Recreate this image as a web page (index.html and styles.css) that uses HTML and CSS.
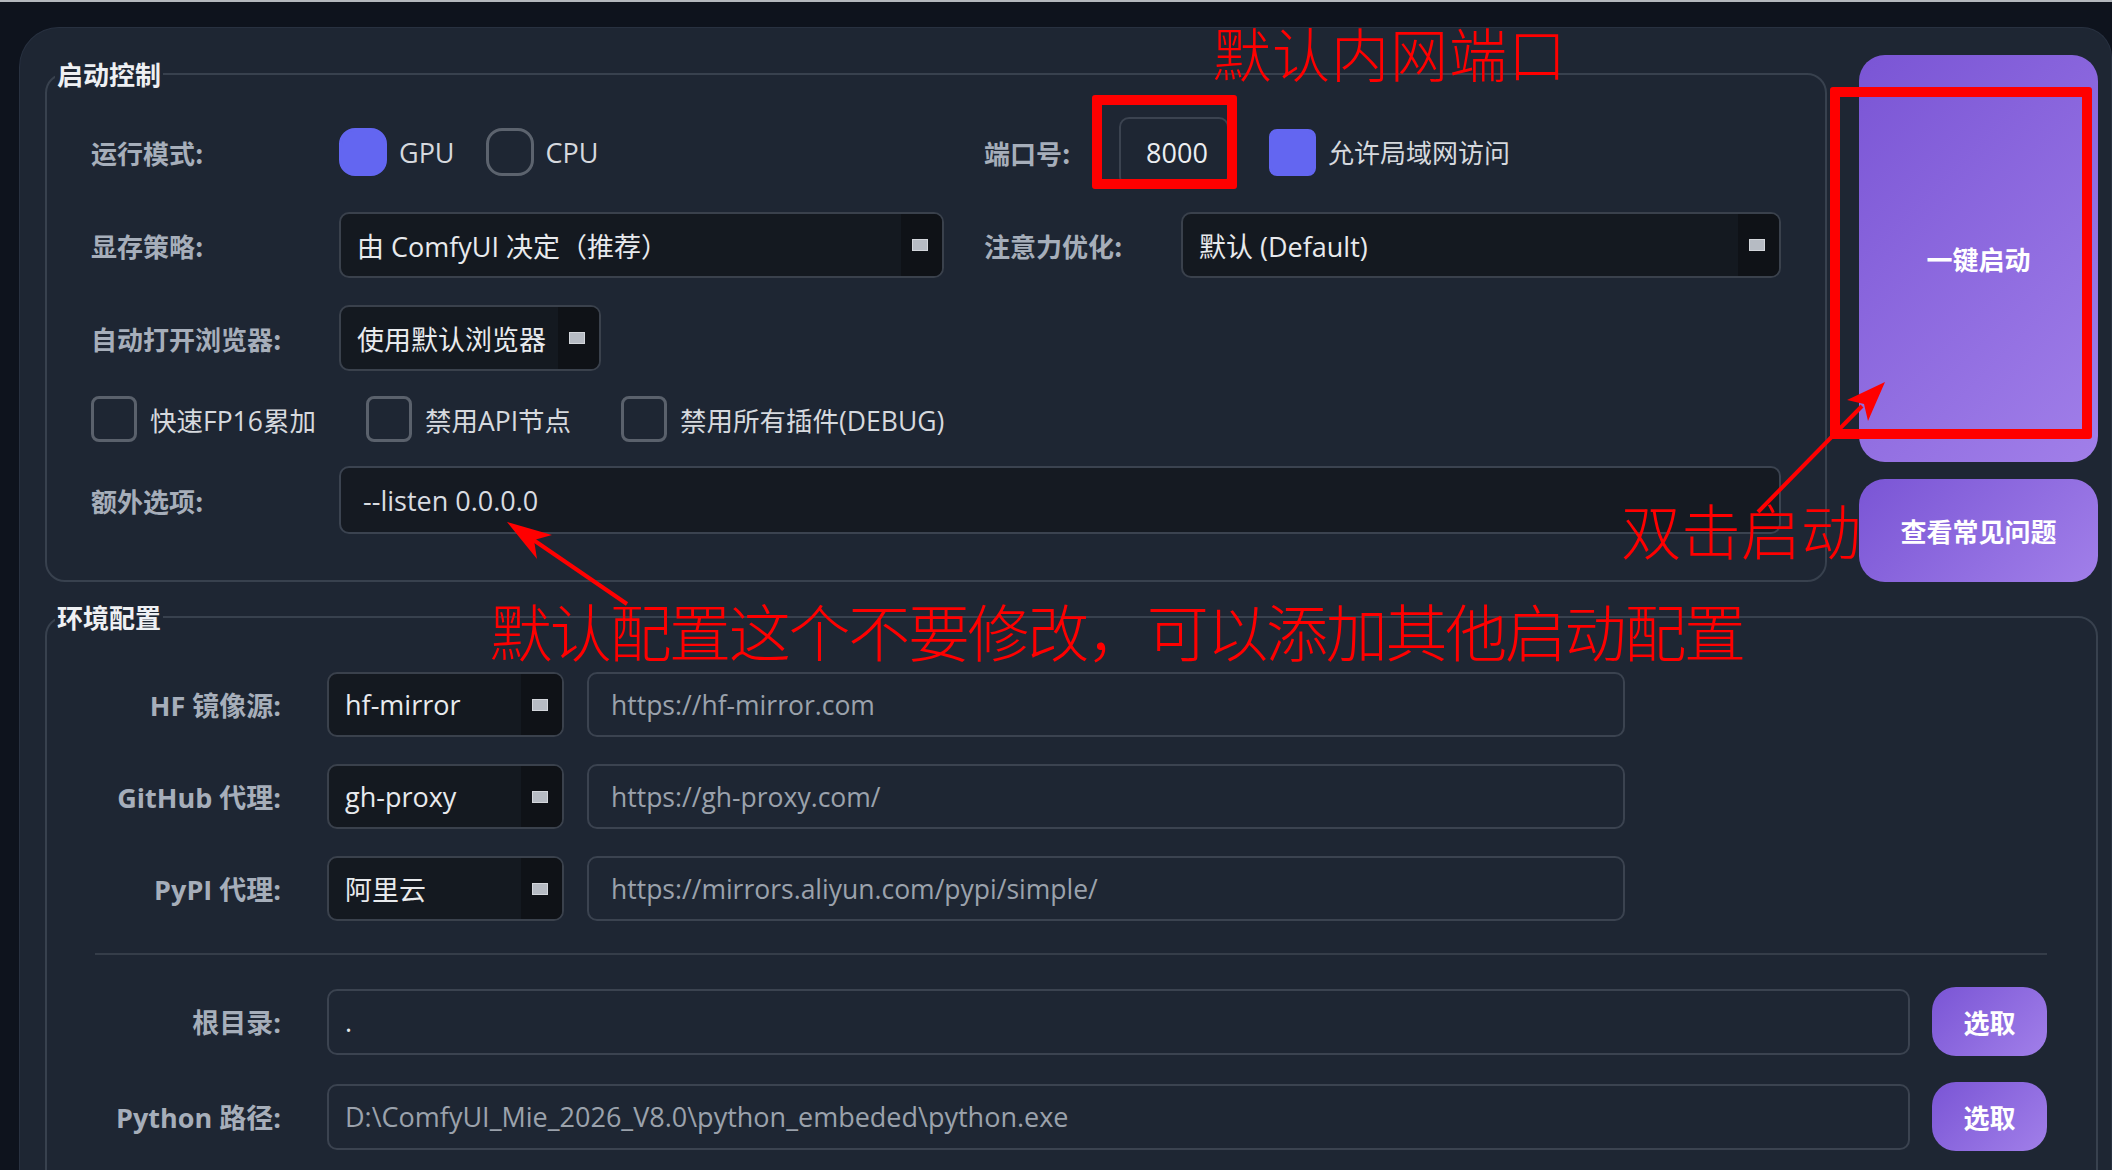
FILE: index.html
```html
<!DOCTYPE html>
<html lang="zh-CN">
<head>
    <meta charset="UTF-8">
    <title>ComfyUI 启动器</title>
    <link rel="stylesheet" href="styles.css">
</head>
<body>
    <div class="window">
        <div class="top">
            <!-- 启动控制 -->
            <fieldset class="group group-launch">
                <legend>启动控制</legend>
                <div class="launch-body">
                    <div class="row">
                        <div class="label">运行模式:</div>
                        <div class="radios">
                            <span class="radio checked"></span><span class="opt">GPU</span>
                            <span class="radio"></span><span class="opt">CPU</span>
                        </div>
                        <div class="label label-port">端口号:</div>
                        <div class="port-input">8000</div>
                        <span class="check checked lan-check"></span><span class="opt">允许局域网访问</span>
                    </div>
                    <div class="row">
                        <div class="label">显存策略:</div>
                        <div class="combo combo-vram"><span class="combo-text">由 ComfyUI 决定（推荐）</span><span class="combo-btn"><i></i></span></div>
                        <div class="label label-attn">注意力优化:</div>
                        <div class="combo combo-attn"><span class="combo-text">默认 (Default)</span><span class="combo-btn"><i></i></span></div>
                    </div>
                    <div class="row">
                        <div class="label">自动打开浏览器:</div>
                        <div class="combo combo-browser"><span class="combo-text">使用默认浏览器</span><span class="combo-btn"><i></i></span></div>
                    </div>
                    <div class="row row-checks">
                        <label class="check-item"><span class="check"></span><span class="opt">快速FP16累加</span></label>
                        <label class="check-item"><span class="check"></span><span class="opt">禁用API节点</span></label>
                        <label class="check-item"><span class="check"></span><span class="opt">禁用所有插件(DEBUG)</span></label>
                    </div>
                    <div class="row">
                        <div class="label">额外选项:</div>
                        <div class="text-input dark">--listen 0.0.0.0</div>
                    </div>
                </div>
            </fieldset>

            <div class="side">
                <button class="purple-btn start-btn">一键启动</button>
                <button class="purple-btn faq-btn">查看常见问题</button>
            </div>
        </div>

        <!-- 环境配置 -->
        <fieldset class="group group-env">
            <legend>环境配置</legend>
            <div class="env-body">
                <div class="env-row">
                    <div class="env-label">HF 镜像源:</div>
                    <div class="combo combo-small"><span class="combo-text">hf-mirror</span><span class="combo-btn"><i></i></span></div>
                    <div class="text-input url-input muted">https://hf-mirror.com</div>
                </div>
                <div class="env-row">
                    <div class="env-label">GitHub 代理:</div>
                    <div class="combo combo-small"><span class="combo-text">gh-proxy</span><span class="combo-btn"><i></i></span></div>
                    <div class="text-input url-input muted">https://gh-proxy.com/</div>
                </div>
                <div class="env-row">
                    <div class="env-label">PyPI 代理:</div>
                    <div class="combo combo-small"><span class="combo-text">阿里云</span><span class="combo-btn"><i></i></span></div>
                    <div class="text-input url-input muted">https://mirrors.aliyun.com/pypi/simple/</div>
                </div>
                <div class="separator"></div>
                <div class="env-row">
                    <div class="env-label">根目录:</div>
                    <div class="text-input path-input">.</div>
                    <button class="purple-btn pick-btn">选取</button>
                </div>
                <div class="env-row env-row-last">
                    <div class="env-label">Python 路径:</div>
                    <div class="text-input path-input muted">D:\ComfyUI_Mie_2026_V8.0\python_embeded\python.exe</div>
                    <button class="purple-btn pick-btn">选取</button>
                </div>
            </div>
        </fieldset>
    </div>

    <!-- 红色标注 -->
    <div class="note note-port">默认内网端口</div>
    <div class="note note-start">双击启动</div>
    <div class="note note-config">默认配置这个不要修改，可以添加其他启动配置</div>
    <div class="mark mark-port"></div>
    <div class="mark mark-start"></div>
    <svg class="arrows" width="2112" height="1170" viewBox="0 0 2112 1170">
        <line x1="1758" y1="510" x2="1862" y2="404" stroke="#ff0000" stroke-width="4"/>
        <polygon points="1885,380 1868,419 1864,402 1847,398" fill="#ff0000"/>
        <line x1="627" y1="602" x2="532" y2="537" stroke="#ff0000" stroke-width="4"/>
        <polygon points="507,520 552,533 534,538 537,557" fill="#ff0000"/>
    </svg>
</body>
</html>
```

FILE: styles.css
```css
/* Общие стили */
body {
    margin: 0;
    width: 2112px;
    height: 1170px;
    overflow: hidden;
    position: relative;
    background-color: #0e131d;
    border-top: 2px solid #b4b8bd;
    box-sizing: border-box;
    font-family: "Open Sans", "Noto Sans CJK SC", sans-serif;
    color: #e5e7ea;
}
.window {
    box-sizing: border-box;
    margin: 25px 0 0 19px;
    width: 2093px;
    height: 1143px; /* до нижнего края окна, остальное обрезаем */
    overflow: hidden;
    padding: 27px 13px 0 25px;
    background-color: #1e2633;
    border: 1px solid #283140;
    border-bottom: none;
    border-radius: 40px 30px 0 0;
}
.top {
    display: flex;
    gap: 32px;
}

/* Группы (fieldset) */
.group {
    margin: 0;
    padding: 0;
    border: 2px solid #38414e;
    border-radius: 20px;
    min-width: 0;
}
.group legend {
    margin-left: 8px;
    padding: 0 2px;
    font-family: "Noto Sans CJK SC", sans-serif;
    font-size: 26px;
    font-weight: bold;
    line-height: 38px;
    color: #eef0f3;
}
.group-launch {
    flex: 1;
}
.launch-body {
    display: grid;
    grid-template-rows: 70px 70px 70px 46px 70px;
    row-gap: 23px;
    padding: 24px 44px 44px 44px;
}
.row {
    display: flex;
    align-items: center;
}
.label {
    width: 248px;
    flex-shrink: 0;
    font-family: "Noto Sans CJK SC", sans-serif;
    font-size: 26px;
    font-weight: bold;
    color: #a6aeba;
}
.label-port {
    width: 135px;
}
.label-attn {
    width: 197px;
    margin-left: 40px;
}
.opt {
    font-size: 26px;
    color: #d6d9de;
}

/* Радио и чекбоксы */
.radios {
    width: 645px;
    display: flex;
    align-items: center;
}
.radio {
    box-sizing: border-box;
    width: 48px;
    height: 48px;
    border: 3px solid #5c636e;
    border-radius: 16px;
    margin-right: 12px;
}
.radio.checked {
    border-color: #6366f1;
    background-color: #6366f1;
}
.radios .opt {
    font-size: 27px;
}
.radios .opt:nth-child(2) {
    margin-right: 31px;
}
.check {
    box-sizing: border-box;
    width: 46px;
    height: 46px;
    border: 3px solid #5a616c;
    border-radius: 8px;
    margin-right: 13px;
    flex-shrink: 0;
}
.check.checked {
    width: 47px;
    height: 47px;
    border-color: #6366f1;
    background-color: #6366f1;
    margin-right: 12px;
}
.lan-check {
    margin-left: 40px;
}
.row-checks {
    gap: 50px;
}
.check-item {
    display: flex;
    align-items: center;
}
.check-item .opt {
    font-size: 26.5px;
}

/* Поля ввода */
.port-input {
    box-sizing: border-box;
    width: 110px;
    height: 70px;
    border: 2px solid #3b4350;
    border-radius: 10px;
    font-size: 27px;
    color: #eceef1;
    display: flex;
    align-items: center;
    justify-content: center;
    padding-left: 6px;
}
.text-input {
    box-sizing: border-box;
    height: 66px;
    border: 2px solid #3b4350;
    border-radius: 10px;
    padding-left: 22px;
    display: flex;
    align-items: center;
    font-size: 27px;
    color: #e5e7ea;
    flex: 1;
}
.text-input.dark {
    height: 68px;
    background-color: #151a22;
    color: #d9dce1;
}
.text-input.muted {
    color: #9ba2ac;
}

/* Выпадающие списки */
.combo {
    box-sizing: border-box;
    height: 66px;
    display: flex;
    align-items: stretch;
    border: 2px solid #3a414c;
    border-radius: 10px;
    background-color: #141920;
    overflow: hidden;
}
.combo-text {
    flex: 1;
    display: flex;
    align-items: center;
    padding-left: 16px;
    font-size: 27px;
    color: #e8eaed;
    white-space: nowrap;
}
.combo-btn {
    width: 41px;
    display: flex;
    align-items: center;
    justify-content: center;
    background-color: #0f1217;
}
.combo-btn i {
    box-sizing: border-box;
    width: 16px;
    height: 12px;
    background-color: #b6bbc3;
    border: 1px solid #d3d6db;
    margin-right: 4px;
}
.combo-vram {
    width: 605px;
}
.combo-attn {
    flex: 1;
}
.combo-browser {
    width: 262px;
}

/* Правая колонка кнопок */
.side {
    width: 239px;
    display: flex;
    flex-direction: column;
    gap: 17px;
}
.purple-btn {
    border: none;
    border-radius: 26px;
    background: linear-gradient(135deg, #7a55d5, #a17fe9);
    color: #ffffff;
    font-family: "Noto Sans CJK SC", sans-serif;
    font-size: 26px;
    font-weight: bold;
    cursor: pointer;
    padding: 0;
}
.start-btn {
    height: 407px;
}
.faq-btn {
    height: 103px;
}

/* 环境配置 */
.group-env {
    margin-top: 16px;
}
.env-body {
    padding: 36px 49px 80px 48px;
    display: flex;
    flex-direction: column;
    gap: 27px;
}
.env-row {
    display: flex;
    align-items: center;
    height: 65px;
}
.env-row-last {
    margin-top: 3px;
}
.env-label {
    width: 186px;
    margin-right: 46px;
    flex-shrink: 0;
    text-align: right;
    font-family: "Open Sans", "Noto Sans CJK SC", sans-serif;
    font-size: 27px;
    font-weight: bold;
    color: #a6aeba;
    white-space: nowrap;
}
.combo-small {
    width: 237px;
    height: 65px;
}
.url-input {
    flex: none;
    width: 1038px;
    height: 65px;
    margin-left: 23px;
    font-size: 26.5px;
}
.path-input {
    height: 66px;
    padding-left: 16px;
}
.pick-btn {
    width: 115px;
    height: 69px;
    margin-left: 22px;
    border-radius: 24px;
}
.separator {
    height: 2px;
    background-color: #353d49;
    margin: 5px 0 7px;
}

/* Красные пометки поверх скриншота */
.note {
    position: absolute;
    font-family: "Noto Sans CJK SC", sans-serif;
    font-weight: 300;
    color: #ff0000;
    line-height: 1;
    white-space: nowrap;
}
.note-port {
    left: 1213px;
    top: 21px;
    font-size: 58px;
    letter-spacing: 1px;
}
.note-start {
    left: 1621px;
    top: 497px;
    font-size: 60px;
}
.note-config {
    left: 490px;
    top: 597px;
    font-size: 62px;
    letter-spacing: -2.3px;
}
.mark {
    position: absolute;
    box-sizing: border-box;
    border: 10px solid #ff0000;
    border-radius: 3px;
}
.mark-port {
    left: 1092px;
    top: 93px;
    width: 145px;
    height: 94px;
}
.mark-start {
    left: 1830px;
    top: 85px;
    width: 262px;
    height: 352px;
}
.arrows {
    position: absolute;
    left: 0;
    top: 0;
}
```
